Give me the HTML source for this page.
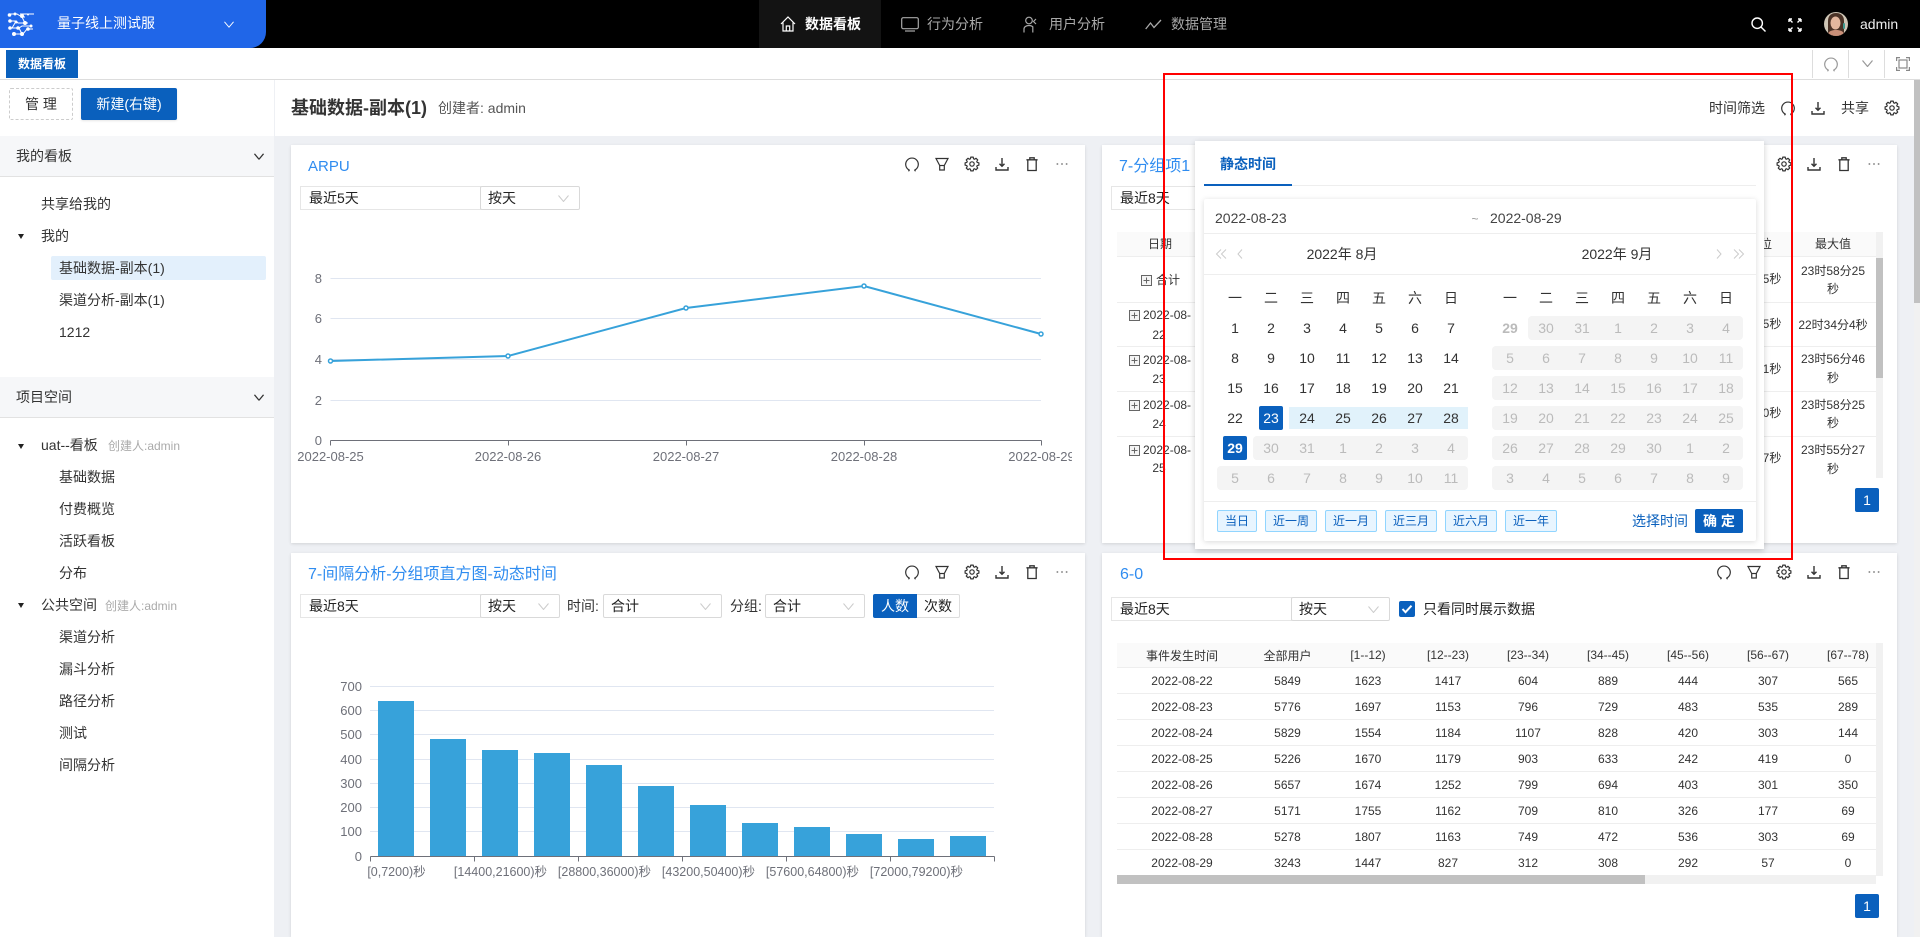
<!DOCTYPE html>
<html lang="zh-CN">
<head>
<meta charset="utf-8">
<title>数据看板</title>
<style>
*{box-sizing:border-box}
html,body{margin:0;padding:0}
body{position:relative;width:1920px;height:937px;overflow:hidden;background:#eef0f4;font-family:"Liberation Sans","Noto Sans CJK SC",sans-serif;font-size:14px;color:#333}
.b{position:absolute}
.l{position:absolute;margin-top:-10px;line-height:20px;white-space:nowrap}
.c{position:absolute;margin-top:-10px;margin-left:-100px;width:200px;text-align:center;line-height:20px;white-space:nowrap}
svg{position:absolute;overflow:visible}
svg.i{fill:none;stroke:#333;stroke-width:1.2;width:16px;height:16px}
svg.clip{overflow:hidden}
.tb{position:absolute;display:flex}
.tb svg{position:static;width:16px;height:16px;margin-right:14px;fill:none;stroke:#333;stroke-width:1.2;flex:none}
.card{position:absolute;background:#fff;box-shadow:0 1px 3px rgba(0,0,0,.12)}
.ttl{position:absolute;margin-top:-10px;line-height:20px;font-size:16px;color:#2f8cf0;white-space:nowrap}
.inp{position:absolute;background:#fff;border:1px solid #e6e6e6;line-height:22px;padding-left:8px;height:24px;white-space:nowrap;color:#222}
.sel{position:absolute;background:#fff;border:1px solid #d9d9d9;border-radius:2px;line-height:22px;padding-left:7px;height:24px;white-space:nowrap;color:#222}
.sel svg{right:10px;top:8px;width:11px;height:7px;fill:none;stroke:#ccc;stroke-width:1}
.tri{position:absolute;width:0;height:0;border-left:3.5px solid transparent;border-right:3.5px solid transparent;border-top:5px solid #222;margin-top:-2px}
.sh{position:absolute;left:0;width:274px;height:41px;background:#f6f7f9;border-bottom:1px solid #e2e2e2}
.hl{position:absolute;background:#eee;height:1px}
.g{position:absolute;display:grid;grid-template-columns:repeat(7,36px);grid-auto-rows:30px;text-align:center;line-height:30px;color:#333}
.g .d{color:#bbb}
.g .s{color:#fff;font-weight:700}
.dis{position:absolute;background:#f4f4f4;border-radius:4px;height:24px}
.cur{position:absolute;background:#0a60bd;border-radius:2px;width:24px;height:24px}
.pre{position:absolute;top:510px;height:22px;background:#e8f5ff;border:1px solid #91d5ff;border-radius:2px;color:#0a60bd;font-size:12px;line-height:20px;text-align:center}
table{border-collapse:separate;border-spacing:0;table-layout:fixed;font-size:12px;color:#333}
th,td{text-align:center;padding:0;font-weight:400;border-bottom:1px solid #eee;overflow:hidden;white-space:nowrap}
th{background:#fafafa;height:25px}
td{height:26px}
.t12{font-size:12px}
.navt{color:#a8a8a8}
</style>
</head>
<body>
<svg width="0" height="0" style="position:absolute">
<symbol id="r" viewBox="0 0 16 16"><path d="M5.600 14.200A6.300 6.300 0 1 1 10.400 14.200M5.600 14.200l-1.200 1M5.600 14.200l-1.300-.6M10.400 14.200l1.200 1"/></symbol>
<symbol id="f" viewBox="0 0 16 16"><path d="M2 2.500h12L10.300 9.500V14H5.700V9.500z"/><path d="M5.700 9.500h4.600"/></symbol>
<symbol id="s" viewBox="0 0 16 16"><path stroke-linejoin="round" d="M14.890 9.220 13.160 9.580 12.770 10.540 13.730 12.020 12.020 13.730 10.540 12.770 9.580 13.160 9.220 14.890 6.780 14.890 6.420 13.160 5.460 12.770 3.980 13.730 2.270 12.020 3.230 10.540 2.840 9.580 1.110 9.220 1.110 6.780 2.840 6.420 3.230 5.460 2.270 3.980 3.980 2.270 5.460 3.230 6.420 2.840 6.780 1.110 9.220 1.110 9.580 2.840 10.540 3.230 12.020 2.270 13.730 3.980 12.770 5.460 13.160 6.420 14.890 6.780Z"/><circle cx="8" cy="8" r="2.200"/></symbol>
<symbol id="d" viewBox="0 0 16 16"><path d="M8 2v8M5.500 7.800L8 10.300l2.500-2.500M2 11v3h12v-3" stroke-width="1.400"/></symbol>
<symbol id="t" viewBox="0 0 16 16"><path d="M3.800 4.500V14.500H12.200V4.500M2.400 3.800h11.200M5.800 3.800V1.800h4.400v2" stroke-width="1.300"/></symbol>
<symbol id="m" viewBox="0 0 16 16"><path d="M3 8h.8M7.600 8h.8M12.200 8h.8" stroke-linecap="round" stroke-width="1"/></symbol>
<symbol id="p" viewBox="0 0 11 11"><rect x=".5" y=".5" width="10" height="10" fill="#f4f4f4" stroke="#666"/><path d="M2.500 5.500h6M5.500 2.500v6" stroke="#666"/></symbol>
<symbol id="v" viewBox="0 0 11 7"><path d="M.5.5L5.500 6.500 10.500.5"/></symbol>
</svg>

<!-- top nav -->
<div class="b" style="left:0;top:0;width:1920px;height:48px;background:#000"></div>
<div class="b" style="left:0;top:0;width:266px;height:48px;background:#2066e8;border-bottom-right-radius:16px"></div>
<svg style="left:7px;top:12px;width:28px;height:24px" viewBox="0 0 28 24" fill="none" stroke="#fff" stroke-width="1"><path d="M2 2h8l5 3h3M13 2h14M3 9h6l2 2h10M15 5l3 6M4 16h8l3-2h9M7 22h9l4-5h6M8 11l-3 5M12 16l3 6"/><g fill="#fff" stroke="none"><circle cx="2.500" cy="3" r="1.800"/><circle cx="8" cy="2" r="1.500"/><circle cx="15" cy="4" r="2"/><circle cx="21" cy="2.500" r="1"/><circle cx="3" cy="9" r="1.800"/><circle cx="9" cy="10" r="1.500"/><circle cx="18" cy="11" r="2"/><circle cx="3" cy="16" r="1.800"/><circle cx="11" cy="16" r="1.800"/><circle cx="24" cy="14" r="1.500"/><circle cx="7" cy="22" r="2"/><circle cx="15" cy="22" r="2"/><circle cx="21" cy="17" r="1.800"/></g></svg>
<div class="l" style="left:57px;top:23px;color:#fff">量子线上测试服</div>
<svg style="left:224px;top:21px;width:10px;height:7px;fill:none;stroke:#fff;stroke-width:1" viewBox="0 0 10 7"><use href="#v"/></svg>

<div class="b" style="left:759px;top:0;width:122px;height:48px;background:#131313"></div>
<svg style="left:780px;top:16px;width:16px;height:16px;fill:none;stroke:#fff;stroke-width:1.2" viewBox="0 0 16 16"><path d="M1 8L8 1l7 7M3 6.500V15h10V6.500M6.300 15V10h3.400v5"/></svg>
<div class="l" style="left:805px;top:24px;color:#fff;font-weight:700">数据看板</div>
<svg style="left:901px;top:17px;width:18px;height:15px;fill:none;stroke:#a8a8a8;stroke-width:1.2" viewBox="0 0 18 15"><rect x=".7" y=".7" width="16.600" height="11" rx="1.500"/><path d="M4 14h10"/></svg>
<div class="l navt" style="left:927px;top:24px">行为分析</div>
<svg style="left:1023px;top:16px;width:16px;height:17px;fill:none;stroke:#a8a8a8;stroke-width:1.2" viewBox="0 0 16 17"><circle cx="6" cy="4.500" r="3.300"/><path d="M1 16.500V13c0-2 2-3.500 5-3.500 1.800 0 3 .5 3.800 1.300V16.500M13 3l-2.500 2.500L13 8"/></svg>
<div class="l navt" style="left:1049px;top:24px">用户分析</div>
<svg style="left:1145px;top:19px;width:17px;height:11px;fill:none;stroke:#a8a8a8;stroke-width:1.3" viewBox="0 0 17 11"><path d="M.7 10L5.500 4l3.500 4.500L16 1"/></svg>
<div class="l navt" style="left:1171px;top:24px">数据管理</div>

<svg style="left:1751px;top:17px;width:15px;height:15px;fill:none;stroke:#fff;stroke-width:1.4" viewBox="0 0 15 15"><circle cx="6.200" cy="6.200" r="5.200"/><path d="M10 10l4.500 4.500"/></svg>
<svg style="left:1788px;top:18px;width:14px;height:14px;fill:none;stroke:#fff;stroke-width:1.400" viewBox="0 0 14 14"><path d="M1 1l3.500 3.500M13 1L9.500 4.500M1 13l3.500-3.500M13 13L9.500 9.500M1 1h3M1 1v3M13 1h-3M13 1v3M1 13h3M1 13v-3M13 13h-3M13 13v-3"/></svg>
<svg style="left:1824px;top:12px;width:24px;height:24px" viewBox="0 0 24 24"><defs><clipPath id="av"><circle cx="12" cy="12" r="12"/></clipPath></defs><g clip-path="url(#av)"><rect width="24" height="24" fill="#cfc6b6"/><path d="M4 24V9c0-6 4-8 8-8s8 2 8 8v15z" fill="#4a3226"/><ellipse cx="11.500" cy="11" rx="5" ry="6.500" fill="#e3b79e"/><path d="M3 24c1-5 5-6 9-6s8 1 9 6z" fill="#c98f78"/><rect x="19" y="11" width="2" height="6" rx="1" fill="#3f9a90"/></g></svg>
<div class="l" style="left:1860px;top:24px;color:#eee">admin</div>

<!-- tab row -->
<div class="b" style="left:0;top:48px;width:1920px;height:32px;background:#fff;border-bottom:1px solid #ddd"></div>
<div class="b t12" style="left:6px;top:50px;width:72px;height:28px;background:#0a60bd;color:#fff;font-weight:700;text-align:center;line-height:28px">数据看板</div>
<div class="b" style="left:1812px;top:50px;width:1px;height:28px;background:#ddd"></div>
<div class="b" style="left:1848px;top:50px;width:1px;height:28px;background:#ddd"></div>
<div class="b" style="left:1884px;top:50px;width:1px;height:28px;background:#ddd"></div>
<svg class="i" style="left:1823px;top:56px;stroke:#999"><use href="#r"/></svg>
<svg style="left:1862px;top:60px;width:11px;height:7px;fill:none;stroke:#999;stroke-width:1.200"><use href="#v"/></svg>
<svg style="left:1896px;top:57px;width:14px;height:14px;fill:none;stroke:#888;stroke-width:1.200" viewBox="0 0 14 14"><rect x="3" y="3" width="8" height="8"/><path d="M.6 4V.6H4M10 .6h3.400V4M13.400 10v3.400H10M4 13.400H.6V10"/></svg>

<!-- sidebar -->
<div class="b" style="left:0;top:80px;width:274px;height:857px;background:#fff"></div>
<div class="b" style="left:9px;top:88px;width:64px;height:32px;border:1px dashed #ccc;border-radius:2px;text-align:center;line-height:30px">管 理</div>
<div class="b" style="left:81px;top:88px;width:96px;height:32px;background:#0a60bd;color:#fff;border-radius:2px;text-align:center;line-height:32px;box-shadow:0 1px 2px rgba(0,0,0,.1)">新建(右键)</div>
<div class="sh" style="top:136px"></div>
<div class="l" style="left:16px;top:156px">我的看板</div>
<svg style="left:254px;top:153px;width:10px;height:7px;fill:none;stroke:#333;stroke-width:1.400" viewBox="0 0 11 7"><use href="#v"/></svg>
<div class="l" style="left:41px;top:204px">共享给我的</div>
<div class="tri" style="left:18px;top:236px"></div>
<div class="l" style="left:41px;top:236px">我的</div>
<div class="b" style="left:51px;top:256px;width:215px;height:24px;background:#e3f0fc;border-radius:2px"></div>
<div class="l" style="left:59px;top:268px">基础数据-副本(1)</div>
<div class="l" style="left:59px;top:300px">渠道分析-副本(1)</div>
<div class="l" style="left:59px;top:332px">1212</div>
<div class="sh" style="top:377px"></div>
<div class="l" style="left:16px;top:397px">项目空间</div>
<svg style="left:254px;top:394px;width:10px;height:7px;fill:none;stroke:#333;stroke-width:1.400" viewBox="0 0 11 7"><use href="#v"/></svg>
<div class="tri" style="left:18px;top:446px"></div>
<div class="l" style="left:41px;top:445px">uat--看板</div>
<div class="l t12" style="left:108px;top:446px;color:#aaa">创建人:admin</div>
<div class="l" style="left:59px;top:477px">基础数据</div>
<div class="l" style="left:59px;top:509px">付费概览</div>
<div class="l" style="left:59px;top:541px">活跃看板</div>
<div class="l" style="left:59px;top:573px">分布</div>
<div class="tri" style="left:18px;top:605px"></div>
<div class="l" style="left:41px;top:605px">公共空间</div>
<div class="l t12" style="left:105px;top:606px;color:#aaa">创建人:admin</div>
<div class="l" style="left:59px;top:637px">渠道分析</div>
<div class="l" style="left:59px;top:669px">漏斗分析</div>
<div class="l" style="left:59px;top:701px">路径分析</div>
<div class="l" style="left:59px;top:733px">测试</div>
<div class="l" style="left:59px;top:765px">间隔分析</div>

<!-- header bar -->
<div class="b" style="left:275px;top:80px;width:1639px;height:56px;background:#fff"></div>
<div class="l" style="left:291px;top:108px;font-size:18px;font-weight:700;color:#333">基础数据-副本(1)</div>
<div class="l" style="left:438px;top:108px;color:#555">创建者: admin</div>
<div class="l" style="left:1709px;top:108px">时间筛选</div>
<svg class="i" style="left:1780px;top:100px"><use href="#r"/></svg>
<svg class="i" style="left:1810px;top:100px"><use href="#d"/></svg>
<div class="l" style="left:1841px;top:108px">共享</div>
<svg class="i" style="left:1884px;top:100px"><use href="#s"/></svg>

<!-- page scrollbar -->
<div class="b" style="left:1914px;top:80px;width:6px;height:857px;background:#f1f1f1"></div>
<div class="b" style="left:1914px;top:80px;width:6px;height:223px;background:#c1c1c1"></div>

<!-- card 1 -->
<div class="card" style="left:291px;top:145px;width:794px;height:398px"></div>
<div class="ttl" style="left:308px;top:167px;font-size:15px">ARPU</div>
<div class="tb" style="left:904px;top:156px"><svg><use href="#r"/></svg><svg><use href="#f"/></svg><svg><use href="#s"/></svg><svg><use href="#d"/></svg><svg><use href="#t"/></svg><svg><use href="#m"/></svg></div>
<div class="inp" style="left:300px;top:186px;width:181px">最近5天</div>
<div class="sel" style="left:480px;top:186px;width:100px">按天<svg viewBox="0 0 11 7"><use href="#v"/></svg></div>
<svg class="clip" style="left:291px;top:145px;width:781px;height:398px" viewBox="291 145 781 398">
<g stroke="#e0e6f1" stroke-width="1"><path d="M330.500 278.500H1041M330.500 318.500H1041M330.500 359.500H1041M330.500 400.500H1041"/></g>
<path d="M330.500 440.500H1041.500M330.500 440.500v5M508.500 440.500v5M686.500 440.500v5M864.500 440.500v5M1041.500 440.500v5" stroke="#6e7079" fill="none"/>
<polyline points="330.500,361 508,356 686,308 864,286 1041,334" fill="none" stroke="#37a2da" stroke-width="2"/>
<g fill="#fff" stroke="#37a2da" stroke-width="1.500"><circle cx="330.500" cy="361" r="2"/><circle cx="508" cy="356" r="2"/><circle cx="686" cy="308" r="2"/><circle cx="864" cy="286" r="2"/><circle cx="1041" cy="334" r="2"/></g>
<g font-family="Liberation Sans, Noto Sans CJK SC, sans-serif" font-size="13" fill="#6e7079">
<g text-anchor="end"><text x="322" y="283">8</text><text x="322" y="323">6</text><text x="322" y="364">4</text><text x="322" y="405">2</text><text x="322" y="445">0</text></g>
<g text-anchor="middle"><text x="330.500" y="461">2022-08-25</text><text x="508" y="461">2022-08-26</text><text x="686" y="461">2022-08-27</text><text x="864" y="461">2022-08-28</text><text x="1041.500" y="461">2022-08-29</text></g>
</g>
</svg>

<!-- card 3 -->
<div class="card" style="left:291px;top:553px;width:794px;height:384px"></div>
<div class="ttl" style="left:308px;top:575px">7-间隔分析-分组项直方图-动态时间</div>
<div class="tb" style="left:904px;top:564px"><svg><use href="#r"/></svg><svg><use href="#f"/></svg><svg><use href="#s"/></svg><svg><use href="#d"/></svg><svg><use href="#t"/></svg><svg><use href="#m"/></svg></div>
<div class="inp" style="left:300px;top:594px;width:181px">最近8天</div>
<div class="sel" style="left:480px;top:594px;width:80px">按天<svg viewBox="0 0 11 7"><use href="#v"/></svg></div>
<div class="l" style="left:567px;top:606px">时间:</div>
<div class="sel" style="left:603px;top:594px;width:119px">合计<svg viewBox="0 0 11 7"><use href="#v"/></svg></div>
<div class="l" style="left:730px;top:606px">分组:</div>
<div class="sel" style="left:765px;top:594px;width:100px">合计<svg viewBox="0 0 11 7"><use href="#v"/></svg></div>
<div class="b" style="left:873px;top:594px;width:44px;height:24px;background:#0a60bd;color:#fff;text-align:center;line-height:24px;border-radius:2px 0 0 2px">人数</div>
<div class="b" style="left:917px;top:594px;width:43px;height:24px;border:1px solid #ddd;border-left:0;text-align:center;line-height:22px;border-radius:0 2px 2px 0;color:#222">次数</div>
<svg class="clip" style="left:291px;top:553px;width:781px;height:384px" viewBox="291 553 781 384">
<path d="M370 686.500H994M370 710.500H994M370 734.500H994M370 759.500H994M370 783.500H994M370 807.500H994M370 831.500H994" stroke="#e0e6f1" fill="none"/>
<g fill="#37a2da"><rect x="378" y="701" width="36" height="155"/><rect x="430" y="739" width="36" height="117"/><rect x="482" y="750" width="36" height="106"/><rect x="534" y="753" width="36" height="103"/><rect x="586" y="765" width="36" height="91"/><rect x="638" y="786" width="36" height="70"/><rect x="690" y="805" width="36" height="51"/><rect x="742" y="823" width="36" height="33"/><rect x="794" y="827" width="36" height="29"/><rect x="846" y="834" width="36" height="22"/><rect x="898" y="839" width="36" height="17"/><rect x="950" y="836" width="36" height="20"/></g>
<path d="M370.500 856.500H994.500M370.500 856.500v5M474.500 856.500v5M578.500 856.500v5M682.500 856.500v5M786.500 856.500v5M890.500 856.500v5M994.500 856.500v5" stroke="#6e7079" fill="none"/>
<g font-family="Liberation Sans, Noto Sans CJK SC, sans-serif" font-size="13" fill="#6e7079" text-anchor="end"><text x="362" y="691">700</text><text x="362" y="715">600</text><text x="362" y="739">500</text><text x="362" y="764">400</text><text x="362" y="788">300</text><text x="362" y="812">200</text><text x="362" y="836">100</text><text x="362" y="861">0</text></g>
<g font-family="Liberation Sans, Noto Sans CJK SC, sans-serif" font-size="12.500" fill="#6e7079" text-anchor="middle"><text x="396.500" y="876">[0,7200)秒</text><text x="500.500" y="876">[14400,21600)秒</text><text x="604.500" y="876">[28800,36000)秒</text><text x="708.500" y="876">[43200,50400)秒</text><text x="812.500" y="876">[57600,64800)秒</text><text x="916.500" y="876">[72000,79200)秒</text></g>
</svg>

<!-- card 2 -->
<div class="card" style="left:1102px;top:145px;width:795px;height:398px"></div>
<div class="ttl" style="left:1119px;top:167px">7-分组项1</div>
<div class="tb" style="left:1716px;top:156px"><svg><use href="#r"/></svg><svg><use href="#f"/></svg><svg><use href="#s"/></svg><svg><use href="#d"/></svg><svg><use href="#t"/></svg><svg><use href="#m"/></svg></div>
<div class="inp" style="left:1111px;top:186px;width:181px">最近8天</div>
<div class="b" style="left:1117px;top:232px;width:759px;height:25px;background:#fafafa;border-bottom:1px solid #eee"></div>
<div class="hl" style="left:1117px;top:302px;width:759px"></div>
<div class="hl" style="left:1117px;top:346px;width:759px"></div>
<div class="hl" style="left:1117px;top:391px;width:759px"></div>
<div class="hl" style="left:1117px;top:436px;width:759px"></div>
<div class="c t12" style="left:1160px;top:244px">日期</div>
<svg style="left:1141px;top:275px;width:11px;height:11px"><use href="#p"/></svg>
<div class="l t12" style="left:1156px;top:280px">合计</div>
<svg style="left:1129px;top:310px;width:11px;height:11px"><use href="#p"/></svg>
<div class="l t12" style="left:1143px;top:315px">2022-08-</div>
<div class="c t12" style="left:1159px;top:335px">22</div>
<svg style="left:1129px;top:355px;width:11px;height:11px"><use href="#p"/></svg>
<div class="l t12" style="left:1143px;top:360px">2022-08-</div>
<div class="c t12" style="left:1159px;top:379px">23</div>
<svg style="left:1129px;top:400px;width:11px;height:11px"><use href="#p"/></svg>
<div class="l t12" style="left:1143px;top:405px">2022-08-</div>
<div class="c t12" style="left:1159px;top:424px">24</div>
<svg style="left:1129px;top:445px;width:11px;height:11px"><use href="#p"/></svg>
<div class="l t12" style="left:1143px;top:450px">2022-08-</div>
<div class="c t12" style="left:1159px;top:468px">25</div>
<div class="c t12" style="left:1760px;top:244px">中位</div>
<div class="c t12" style="left:1772px;top:279px">5秒</div>
<div class="c t12" style="left:1772px;top:324px">5秒</div>
<div class="c t12" style="left:1772px;top:369px">1秒</div>
<div class="c t12" style="left:1772px;top:413px">0秒</div>
<div class="c t12" style="left:1772px;top:458px">7秒</div>
<div class="c t12" style="left:1833px;top:244px">最大值</div>
<div class="c t12" style="left:1833px;top:271px">23时58分25</div>
<div class="c t12" style="left:1833px;top:289px">秒</div>
<div class="c t12" style="left:1833px;top:325px">22时34分4秒</div>
<div class="c t12" style="left:1833px;top:359px">23时56分46</div>
<div class="c t12" style="left:1833px;top:378px">秒</div>
<div class="c t12" style="left:1833px;top:405px">23时58分25</div>
<div class="c t12" style="left:1833px;top:423px">秒</div>
<div class="c t12" style="left:1833px;top:450px">23时55分27</div>
<div class="c t12" style="left:1833px;top:469px">秒</div>
<div class="b" style="left:1876px;top:232px;width:7px;height:246px;background:#f1f1f1"></div>
<div class="b" style="left:1876px;top:258px;width:7px;height:120px;background:#c1c1c1"></div>
<div class="b" style="left:1855px;top:488px;width:24px;height:24px;background:#0a60bd;color:#fff;text-align:center;line-height:24px;border-radius:2px">1</div>

<!-- card 4 -->
<div class="card" style="left:1102px;top:553px;width:795px;height:384px"></div>
<div class="ttl" style="left:1120px;top:575px">6-0</div>
<div class="tb" style="left:1716px;top:564px"><svg><use href="#r"/></svg><svg><use href="#f"/></svg><svg><use href="#s"/></svg><svg><use href="#d"/></svg><svg><use href="#t"/></svg><svg><use href="#m"/></svg></div>
<div class="inp" style="left:1111px;top:597px;width:181px">最近8天</div>
<div class="sel" style="left:1291px;top:597px;width:99px">按天<svg viewBox="0 0 11 7"><use href="#v"/></svg></div>
<div class="b" style="left:1399px;top:601px;width:16px;height:16px;background:#0a60bd;border-radius:2px"></div>
<svg style="left:1399px;top:601px;width:16px;height:16px;fill:none;stroke:#fff;stroke-width:2" viewBox="0 0 16 16"><path d="M3.500 8l3 3.200 6-6.500"/></svg>
<div class="l" style="left:1423px;top:609px;color:#222">只看同时展示数据</div>
<div class="b" style="left:1117px;top:643px;width:759px;height:233px;overflow:hidden">
<table style="width:771px">
<colgroup><col style="width:130px"><col style="width:81px"><col style="width:80px"><col style="width:80px"><col style="width:80px"><col style="width:80px"><col style="width:80px"><col style="width:80px"><col style="width:80px"></colgroup>
<tr><th>事件发生时间</th><th>全部用户</th><th>[1--12)</th><th>[12--23)</th><th>[23--34)</th><th>[34--45)</th><th>[45--56)</th><th>[56--67)</th><th>[67--78)</th></tr>
<tr><td>2022-08-22</td><td>5849</td><td>1623</td><td>1417</td><td>604</td><td>889</td><td>444</td><td>307</td><td>565</td></tr>
<tr><td>2022-08-23</td><td>5776</td><td>1697</td><td>1153</td><td>796</td><td>729</td><td>483</td><td>535</td><td>289</td></tr>
<tr><td>2022-08-24</td><td>5829</td><td>1554</td><td>1184</td><td>1107</td><td>828</td><td>420</td><td>303</td><td>144</td></tr>
<tr><td style="height:25px">2022-08-25</td><td>5226</td><td>1670</td><td>1179</td><td>903</td><td>633</td><td>242</td><td>419</td><td>0</td></tr>
<tr><td>2022-08-26</td><td>5657</td><td>1674</td><td>1252</td><td>799</td><td>694</td><td>403</td><td>301</td><td>350</td></tr>
<tr><td>2022-08-27</td><td>5171</td><td>1755</td><td>1162</td><td>709</td><td>810</td><td>326</td><td>177</td><td>69</td></tr>
<tr><td>2022-08-28</td><td>5278</td><td>1807</td><td>1163</td><td>749</td><td>472</td><td>536</td><td>303</td><td>69</td></tr>
<tr><td>2022-08-29</td><td>3243</td><td>1447</td><td>827</td><td>312</td><td>308</td><td>292</td><td>57</td><td>0</td></tr>
</table>
</div>
<div class="b" style="left:1876px;top:643px;width:7px;height:233px;background:#f1f1f1"></div>
<div class="b" style="left:1117px;top:875px;width:759px;height:9px;background:#f1f1f1"></div>
<div class="b" style="left:1117px;top:875px;width:528px;height:9px;background:#c1c1c1"></div>
<div class="b" style="left:1855px;top:894px;width:24px;height:24px;background:#0a60bd;color:#fff;text-align:center;line-height:24px;border-radius:2px">1</div>

<!-- date popup -->
<div class="b" style="left:1195px;top:141px;width:569px;height:408px;background:#fff;box-shadow:0 2px 6px rgba(0,0,0,.2)"></div>
<div class="l" style="left:1220px;top:164px;color:#0a60bd;font-weight:700">静态时间</div>
<div class="b" style="left:1204px;top:185px;width:552px;height:1px;background:#eee"></div>
<div class="b" style="left:1204px;top:184px;width:88px;height:2px;background:#0a60bd"></div>
<div class="b" style="left:1204px;top:199px;width:552px;height:342px;background:#fff;border-radius:2px;box-shadow:0 1px 6px rgba(0,0,0,.15)"></div>
<div class="l" style="left:1215px;top:218px;color:#444">2022-08-23</div>
<div class="c t12" style="left:1475px;top:219px;color:#999">~</div>
<div class="l" style="left:1490px;top:218px;color:#444">2022-08-29</div>
<div class="hl" style="left:1204px;top:233px;width:552px"></div>
<svg style="left:1216px;top:249px;width:30px;height:10px;fill:none;stroke:#ccc;stroke-width:1" viewBox="0 0 30 10"><path d="M5 .5L.5 5 5 9.500M10 .5L5.500 5 10 9.500M26 .5L22 5l4 4.500"/></svg>
<div class="c" style="left:1342px;top:254px">2022年 8月</div>
<div class="c" style="left:1617px;top:254px">2022年 9月</div>
<svg style="left:1716px;top:249px;width:30px;height:10px;fill:none;stroke:#ccc;stroke-width:1" viewBox="0 0 30 10"><path d="M1 .5L5 5 1 9.500M18 .5L22.500 5 18 9.500M23 .5L27.500 5 23 9.500"/></svg>
<div class="hl" style="left:1204px;top:274px;width:552px"></div>

<div class="dis" style="left:1253px;top:436px;width:215px"></div>
<div class="dis" style="left:1217px;top:466px;width:251px"></div>
<div class="b" style="left:1289px;top:407px;width:179px;height:22px;background:#e1f2fb"></div>
<div class="cur" style="left:1259px;top:406px"></div>
<div class="cur" style="left:1223px;top:436px"></div>
<div class="dis" style="left:1528px;top:316px;width:215px"></div>
<div class="dis" style="left:1492px;top:346px;width:251px"></div>
<div class="dis" style="left:1492px;top:376px;width:251px"></div>
<div class="dis" style="left:1492px;top:406px;width:251px"></div>
<div class="dis" style="left:1492px;top:436px;width:251px"></div>
<div class="dis" style="left:1492px;top:466px;width:251px"></div>

<div class="g" style="left:1217px;top:283px">
<span>一</span><span>二</span><span>三</span><span>四</span><span>五</span><span>六</span><span>日</span>
<span>1</span><span>2</span><span>3</span><span>4</span><span>5</span><span>6</span><span>7</span>
<span>8</span><span>9</span><span>10</span><span>11</span><span>12</span><span>13</span><span>14</span>
<span>15</span><span>16</span><span>17</span><span>18</span><span>19</span><span>20</span><span>21</span>
<span>22</span><span class="s" style="font-weight:400">23</span><span>24</span><span>25</span><span>26</span><span>27</span><span>28</span>
<span class="s">29</span><span class="d">30</span><span class="d">31</span><span class="d">1</span><span class="d">2</span><span class="d">3</span><span class="d">4</span>
<span class="d">5</span><span class="d">6</span><span class="d">7</span><span class="d">8</span><span class="d">9</span><span class="d">10</span><span class="d">11</span>
</div>
<div class="g" style="left:1492px;top:283px">
<span>一</span><span>二</span><span>三</span><span>四</span><span>五</span><span>六</span><span>日</span>
<span class="d" style="font-weight:700">29</span><span class="d">30</span><span class="d">31</span><span class="d">1</span><span class="d">2</span><span class="d">3</span><span class="d">4</span>
<span class="d">5</span><span class="d">6</span><span class="d">7</span><span class="d">8</span><span class="d">9</span><span class="d">10</span><span class="d">11</span>
<span class="d">12</span><span class="d">13</span><span class="d">14</span><span class="d">15</span><span class="d">16</span><span class="d">17</span><span class="d">18</span>
<span class="d">19</span><span class="d">20</span><span class="d">21</span><span class="d">22</span><span class="d">23</span><span class="d">24</span><span class="d">25</span>
<span class="d">26</span><span class="d">27</span><span class="d">28</span><span class="d">29</span><span class="d">30</span><span class="d">1</span><span class="d">2</span>
<span class="d">3</span><span class="d">4</span><span class="d">5</span><span class="d">6</span><span class="d">7</span><span class="d">8</span><span class="d">9</span>
</div>

<div class="hl" style="left:1204px;top:501px;width:552px"></div>
<div class="pre" style="left:1217px;width:40px">当日</div>
<div class="pre" style="left:1265px;width:52px">近一周</div>
<div class="pre" style="left:1325px;width:52px">近一月</div>
<div class="pre" style="left:1385px;width:52px">近三月</div>
<div class="pre" style="left:1445px;width:52px">近六月</div>
<div class="pre" style="left:1505px;width:52px">近一年</div>
<div class="l" style="left:1632px;top:521px;color:#0a60bd">选择时间</div>
<div class="b" style="left:1695px;top:509px;width:48px;height:24px;background:#0a60bd;color:#fff;border-radius:2px;text-align:center;line-height:24px;font-weight:700">确 定</div>

<!-- red annotation -->
<div class="b" style="left:1163px;top:73px;width:630px;height:487px;border:2px solid #f00"></div>
</body>
</html>
